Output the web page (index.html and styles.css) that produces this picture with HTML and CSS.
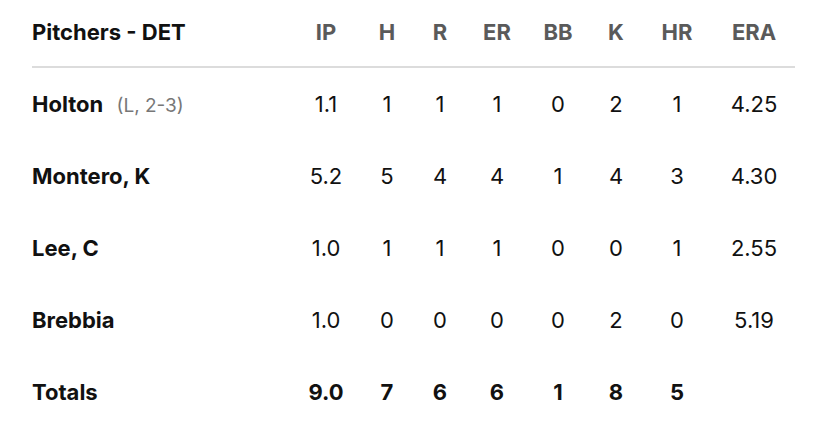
FILE: index.html
```html
<!DOCTYPE html>
<html>
<head>
<meta charset="utf-8">
<link rel="stylesheet" href="styles.css">
</head>
<body>
<div class="box">
  <div class="row head">
    <div class="name">Pitchers - DET</div>
    <div>IP</div><div>H</div><div>R</div><div>ER</div><div>BB</div><div>K</div><div>HR</div><div>ERA</div>
  </div>
  <div class="row">
    <div class="name">Holton <span class="note">(L, 2-3)</span></div>
    <div>1.1</div><div>1</div><div>1</div><div>1</div><div>0</div><div>2</div><div>1</div><div>4.25</div>
  </div>
  <div class="row">
    <div class="name">Montero, K</div>
    <div>5.2</div><div>5</div><div>4</div><div>4</div><div>1</div><div>4</div><div>3</div><div>4.30</div>
  </div>
  <div class="row">
    <div class="name">Lee, C</div>
    <div>1.0</div><div>1</div><div>1</div><div>1</div><div>0</div><div>0</div><div>1</div><div>2.55</div>
  </div>
  <div class="row">
    <div class="name">Brebbia</div>
    <div>1.0</div><div>0</div><div>0</div><div>0</div><div>0</div><div>2</div><div>0</div><div>5.19</div>
  </div>
  <div class="row total">
    <div class="name">Totals</div>
    <div>9.0</div><div>7</div><div>6</div><div>6</div><div>1</div><div>8</div><div>5</div><div></div>
  </div>
</div>
</body>
</html>
```
FILE: styles.css
```css
html, body {
  margin: 0;
  background: #fff;
}
body {
  font-family: Inter, "Liberation Sans", sans-serif;
  color: #111;
}
.box {
  padding: 0 33px 0 32px;
}
.row {
  display: grid;
  grid-template-columns: 263px 62px 60px 46px 68px 54px 62px 60px 94px;
  align-items: center;
  height: 72px;
  font-size: 22px;
}
.row > div {
  text-align: center;
}
.row > .name {
  text-align: left;
  font-weight: 700;
}
.head {
  height: 63px;
  padding-bottom: 3px;
  border-bottom: 2px solid #dcdcdc;
  color: #5a5a5a;
  font-weight: 700;
}
.head > .name {
  color: #111;
}
.note {
  font-weight: 400;
  color: #777;
  font-size: 19px;
  margin-left: 8px;
}
.total > div {
  font-weight: 700;
}
```
